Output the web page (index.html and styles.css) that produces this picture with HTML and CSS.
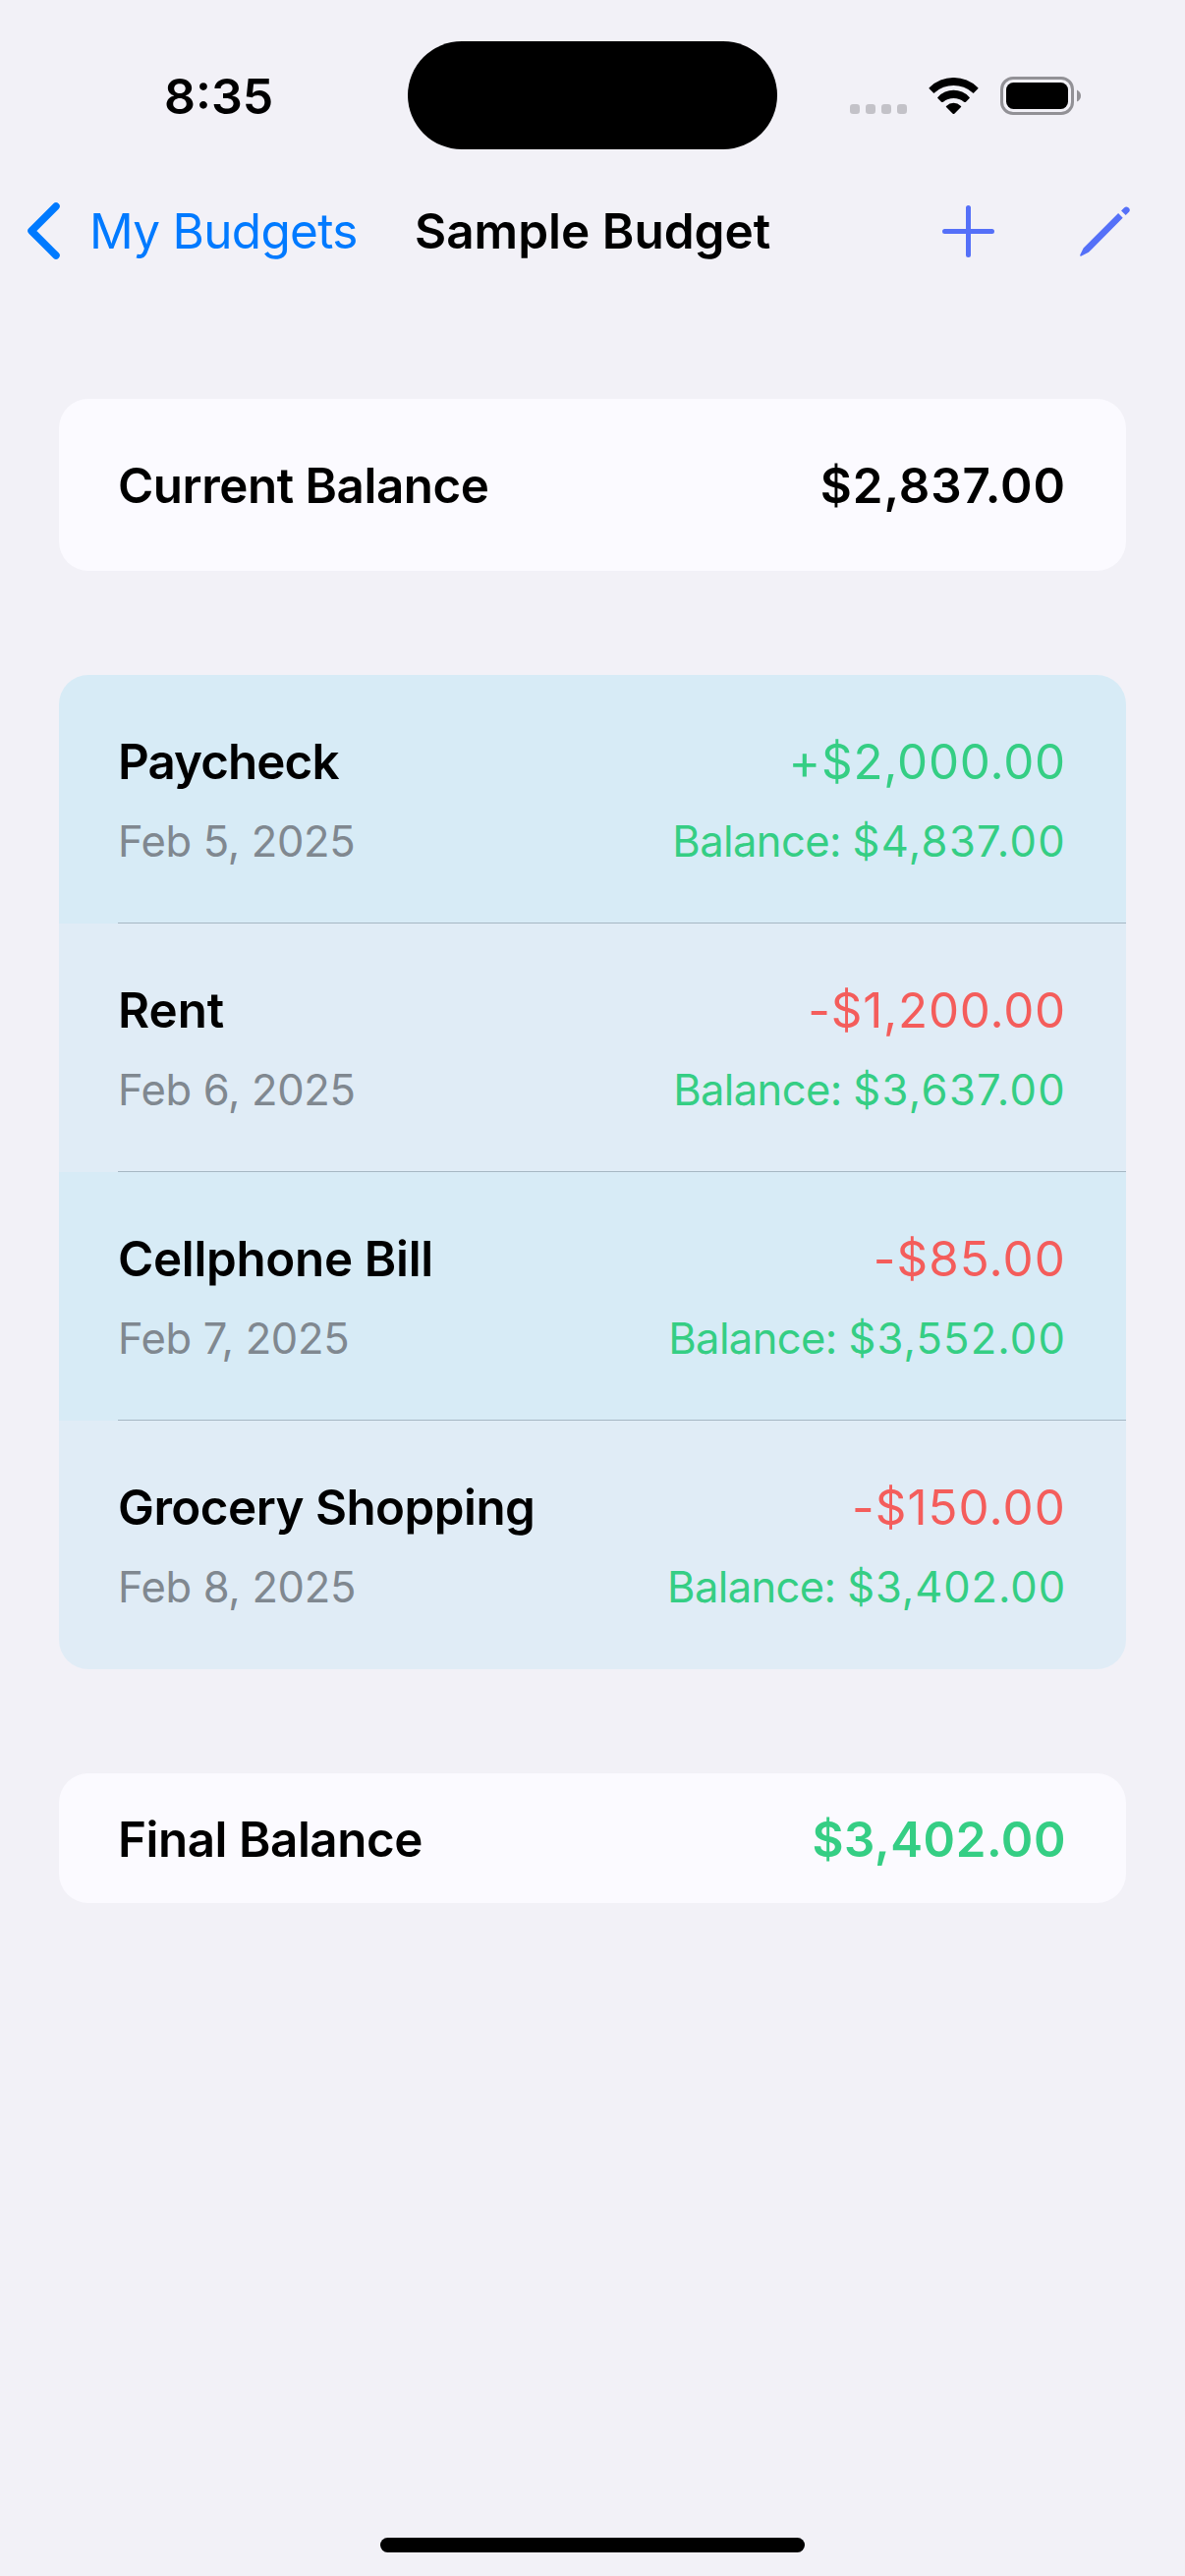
FILE: index.html
```
<!DOCTYPE html>
<html lang="en">
<head>
<meta charset="utf-8">
<title>Sample Budget</title>
<link rel="stylesheet" href="styles.css">
</head>
<body>
<div class="screen">
  <header class="status-bar">
    <div class="time">8:35</div>
    <div class="island"></div>
    <div class="status-icons">
      <svg class="cellular" viewBox="0 0 58 10"><rect width="10" height="10" rx="3.2"/><rect x="16" width="10" height="10" rx="3.2"/><rect x="32" width="10" height="10" rx="3.2"/><rect x="48" width="10" height="10" rx="3.2"/></svg>
      <svg class="wifi" viewBox="286 57 151 111">
        <path d="M288 87A105 105 0 0 1 435 87Q438 89 436 91L424 103Q422 106 419 103A85.700 85.700 0 0 0 304 103Q301 106 299 103L287 91Q285 89 288 87Z"/>
        <path d="M314 116A65 65 0 0 1 409 116Q412 118 410 120L399 131Q396 133 393 131A50 50 0 0 0 330 131Q327 133 324 131L313 120Q311 118 314 116Z"/>
        <path d="M340 143A30 30 0 0 1 383 143Q386 145 384 147L364 167Q361.500 169 359 167L339 147Q337 145 340 143Z"/>
      </svg>
      <svg class="battery" viewBox="0 0 82 39">
        <rect class="battery-shell" x="1.500" y="1.500" width="72" height="36" rx="11.500"/>
        <rect x="6" y="6" width="63" height="27" rx="7.500"/>
        <path class="battery-cap" d="M78 13.500Q82 15.500 82 19.500T78 25.500Z"/>
      </svg>
    </div>
  </header>

  <nav class="nav-bar">
    <a class="back">
      <svg class="chevron" viewBox="0 0 33 58"><path d="M29 4L4 29L29 54"/></svg>
      <span>My Budgets</span>
    </a>
    <h1 class="title">Sample Budget</h1>
    <div class="actions">
      <svg class="plus" viewBox="0 0 53 53"><path d="M26.500 2.500V50.500M2.500 26.500H50.500"/></svg>
      <svg class="pencil" viewBox="507 60 154 153"><path d="M634 73L643 64Q649 58 656 63Q664 70 658 77L648 87ZM625 81L639 95L534 201L512 212Q506 214 508 208L518 188Z"/></svg>
    </div>
  </nav>

  <main class="content">
    <section class="card card-current">
      <span class="name ls-current">Current Balance</span>
      <span class="total ls-total">$2,837.00</span>
    </section>

    <section class="list">
      <article class="entry">
        <div class="line"><span class="name ls-paycheck">Paycheck</span><span class="amount income">+$2,000.00</span></div>
        <div class="line detail"><span class="date">Feb 5, 2025</span><span class="balance">Balance: <span class="figure ls-wide">$4,837.00</span></span></div>
      </article>
      <article class="entry">
        <div class="line"><span class="name">Rent</span><span class="amount expense">-$1,200.00</span></div>
        <div class="line detail"><span class="date">Feb 6, 2025</span><span class="balance">Balance: <span class="figure ls-wide">$3,637.00</span></span></div>
      </article>
      <article class="entry">
        <div class="line"><span class="name ls-bill">Cellphone Bill</span><span class="amount expense ls-amount-wide">-$85.00</span></div>
        <div class="line detail"><span class="date">Feb 7, 2025</span><span class="balance">Balance: <span class="figure ls-mid">$3,552.00</span></span></div>
      </article>
      <article class="entry">
        <div class="line"><span class="name ls-grocery">Grocery Shopping</span><span class="amount expense ls-amount-wide">-$150.00</span></div>
        <div class="line detail"><span class="date">Feb 8, 2025</span><span class="balance">Balance: <span class="figure">$3,402.00</span></span></div>
      </article>
    </section>

    <section class="card card-final">
      <span class="name ls-current">Final Balance</span>
      <span class="total final">$3,402.00</span>
    </section>
  </main>

  <div class="home-indicator"></div>
</div>
</body>
</html>
```
FILE: styles.css
```
* { box-sizing: border-box; }

body {
  margin: 0;
  background: #f2f1f7;
  color: #000;
  font-family: Inter, "Liberation Sans", sans-serif;
}

svg { display: block; flex: none; }

.screen {
  width: 1206px;
  height: 2622px;
  display: flex;
  flex-direction: column;
  align-items: center;
  padding-bottom: 24px;
}

/* Status bar */
.status-bar {
  width: 100%;
  height: 152px;
  padding-top: 42px;
  display: grid;
  grid-template-columns: 415px 376px 415px;
}

.time {
  padding: 26px 0 0 167px;
  font-size: 50px;
  font-weight: 600;
  line-height: 60px;
}

.island { height: 110px; border-radius: 56px; background: #000; }

.status-icons {
  display: flex;
  align-items: flex-start;
  padding: 36px 0 0 74px;
}

.cellular { width: 58px; height: 10px; margin-top: 28px; fill: #c3c2c8; }
.wifi { width: 51px; height: 37px; margin: 1px 0 0 22px; }
.battery { width: 82px; height: 39px; margin-left: 22px; }
.battery-shell { fill: none; stroke: #929196; stroke-width: 3; }
.battery-cap { fill: #929196; }

/* Navigation bar */
.nav-bar {
  width: 100%;
  height: 132px;
  margin-top: 17px;
  padding: 0 56px 0 28px;
  display: grid;
  grid-template-columns: 394px 1fr 191px;
  align-items: center;
}

.back {
  display: flex;
  align-items: center;
  gap: 30px;
  color: #007aff;
  font-size: 49.5px;
  line-height: 60px;
  letter-spacing: -0.7px;
  white-space: nowrap;
}

.chevron {
  width: 33px;
  height: 58px;
  margin-top: -1px;
  fill: none;
  stroke: #007aff;
  stroke-width: 7.5;
  stroke-linecap: round;
  stroke-linejoin: round;
}

.title {
  margin: 0;
  font-size: 49.5px;
  font-weight: 600;
  line-height: 60px;
  white-space: nowrap;
}

.actions { display: flex; justify-content: space-between; }

.plus {
  width: 53px;
  height: 53px;
  stroke: #5570f8;
  stroke-width: 5;
  stroke-linecap: round;
}

.pencil { width: 51px; height: 51px; margin-top: 1px; fill: #5570f8; }

/* Cards and list */
.content {
  width: 1086px;
  margin-top: 105px;
  display: flex;
  flex-direction: column;
}

.card {
  display: flex;
  justify-content: space-between;
  padding: 0 61px 0 60px;
  border-radius: 30px;
  background: #fbfaff;
}

.card-current { height: 175px; padding-top: 58px; }
.card-final { height: 132px; padding-top: 37px; }

.list {
  margin: 106px 0;
  border-radius: 30px;
  overflow: hidden;
}

.entry {
  height: 253px;
  padding: 58px 61px 0 60px;
  background: #d7ebf6;
}

.entry:nth-child(even) { background-color: #e0ecf6; }

.entry:not(:last-child) {
  background-image: linear-gradient(#a6b7c3, #a6b7c3);
  background-repeat: no-repeat;
  background-position: 60px 100%;
  background-size: 1026px 1px;
}

.line { display: flex; justify-content: space-between; white-space: nowrap; }
.detail { margin-top: 24px; }

.name, .total, .amount { font-size: 49.3px; line-height: 60px; }
.name, .total { font-weight: 600; }
.amount { letter-spacing: 0.8px; }
.date, .balance { font-size: 43.5px; line-height: 54px; }
.date { color: #808890; letter-spacing: -0.35px; }
.balance, .income, .final { color: #35ce84; }
.expense { color: #f45d5b; }

/* Tracking for labels and figures */
.balance { letter-spacing: -0.6px; }
.figure { letter-spacing: 0.9px; }
.ls-wide { letter-spacing: 1.35px; }
.ls-mid { letter-spacing: 1.13px; }
.amount.ls-amount-wide { letter-spacing: 1.1px; }
.ls-total { letter-spacing: 0.95px; }
.final { letter-spacing: 0.55px; }
.ls-current { letter-spacing: -0.45px; }
.ls-grocery { letter-spacing: -0.52px; }
.ls-paycheck { letter-spacing: -0.9px; }
.ls-bill { letter-spacing: -0.31px; }

.home-indicator {
  width: 432px;
  height: 15px;
  margin-top: auto;
  border-radius: 8px;
  background: #000;
}
```
